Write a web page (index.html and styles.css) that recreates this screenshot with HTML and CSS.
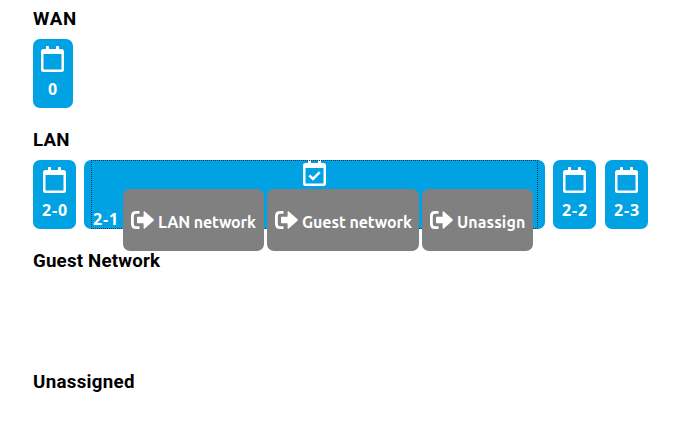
FILE: index.html
```html
<!DOCTYPE html>
<html lang="en">
<head>
<meta charset="utf-8">
<title>Network interfaces</title>
<link rel="stylesheet" href="styles.css">
</head>
<body>
<svg class="defs" aria-hidden="true">
  <symbol id="calendar" viewBox="0 0 23 26">
    <path fill-rule="evenodd" d="M2.500 3H5V.8Q5 0 5.800 0H7.200Q8 0 8 .8V3H15V.8Q15 0 15.800 0H17.200Q18 0 18 .8V3H20.500Q23 3 23 5.500V23.500Q23 26 20.500 26H2.500Q0 26 0 23.500V5.500Q0 3 2.500 3ZM2.500 8V23.100Q2.500 23.600 3 23.600H20Q20.500 23.600 20.500 23.100V8Z"/>
  </symbol>
  <symbol id="check" viewBox="0 0 23 26">
    <use href="#calendar" width="23" height="26"/>
    <path d="M6.300 15.300L10 19L16.800 12.200" fill="none" stroke="currentColor" stroke-width="2.500"/>
  </symbol>
  <symbol id="move" viewBox="0 0 23 18">
    <path d="M8.500 1.400H5Q1.400 1.400 1.400 5V13Q1.400 16.600 5 16.600H8.500" fill="none" stroke="currentColor" stroke-width="2.800"/>
    <path d="M6 6.600Q6 5.700 6.900 5.700H12.600V1.200Q12.600-.2 13.800.6L22.500 8.300Q23.200 9 22.500 9.700L13.800 17.400Q12.600 18.200 12.600 16.800V12.300H6.900Q6 12.300 6 11.400Z"/>
  </symbol>
</svg>
<main>
  <section>
    <h3 class="wan">WAN</h3>
    <div class="ports">
      <div class="port single"><svg class="cal"><use href="#calendar"/></svg><span>0</span></div>
    </div>
  </section>
  <section>
    <h3>LAN</h3>
    <div class="ports">
      <div class="port"><svg class="cal"><use href="#calendar"/></svg><span>2-0</span></div>
      <div class="port selected">
        <div class="focus">
          <svg class="cal"><use href="#check"/></svg>
          <span>2-1</span>
        </div>
        <div class="menu">
          <div class="action lan"><svg class="arrow"><use href="#move"/></svg><span>LAN network</span></div>
          <div class="action guest"><svg class="arrow"><use href="#move"/></svg><span>Guest network</span></div>
          <div class="action unassign"><svg class="arrow"><use href="#move"/></svg><span>Unassign</span></div>
        </div>
      </div>
      <div class="port"><svg class="cal"><use href="#calendar"/></svg><span>2-2</span></div>
      <div class="port last"><svg class="cal"><use href="#calendar"/></svg><span>2-3</span></div>
    </div>
  </section>
  <section>
    <h3>Guest Network</h3>
  </section>
  <section class="unassigned">
    <h3>Unassigned</h3>
  </section>
</main>
</body>
</html>
```
FILE: styles.css
```css
* { box-sizing: border-box; }
body {
  margin: 0;
  background: #fff;
  font-family: Ubuntu, "Noto Sans", sans-serif;
}
.defs { display: none; }
main { padding: 8px 0 0 33px; }
section { height: 121px; }
.unassigned { height: 40px; }
h3 {
  margin: 0 0 9px;
  font: 700 18.72px/22px Roboto, sans-serif;
  letter-spacing: .2px;
  color: #000;
}
.wan { letter-spacing: .7px; }
.unassigned h3 { letter-spacing: .3px; }
.ports { display: flex; gap: 8px; }
.port {
  position: relative;
  display: flex;
  flex-direction: column;
  align-items: center;
  width: 43px;
  height: 69px;
  padding-top: 7px;
  border-radius: 7px;
  background: #00a2e4;
  color: #fff;
  font: 700 16px/20px "Open Sans", sans-serif;
  letter-spacing: .8px;
}
.single { width: 40px; padding-right: 1px; }
.last { margin-left: 1px; }
.port span { white-space: nowrap; }
.port > span { margin-right: -1px; }
.cal {
  display: block;
  flex: none;
  width: 23px;
  height: 26px;
  margin-bottom: 7px;
  fill: currentColor;
}
.selected {
  width: 461px;
  padding: 0 7px;
}
.focus {
  display: flex;
  flex-direction: column;
  align-items: center;
  width: 100%;
  height: 69px;
  outline: 1px dotted #173c4e;
  outline-offset: -1px;
}
.focus > .cal { margin-bottom: 23px; }
.focus > span { align-self: flex-start; margin-left: 2px; }
.menu {
  position: absolute;
  left: 39px;
  top: 29px;
  display: flex;
  gap: 3px;
  font-family: Ubuntu, "Noto Sans", sans-serif;
  letter-spacing: 0;
}
.action {
  display: flex;
  align-items: center;
  gap: 4px;
  height: 62px;
  padding-left: 8px;
  border-radius: 7px;
  background: #808080;
}
.action span { padding-top: 4px; }
.lan { width: 141px; letter-spacing: -.14px; }
.guest { width: 152px; letter-spacing: -.08px; }
.unassign { width: 111px; letter-spacing: .1px; }
.arrow {
  flex: none;
  width: 23px;
  height: 18px;
  fill: currentColor;
}
```
